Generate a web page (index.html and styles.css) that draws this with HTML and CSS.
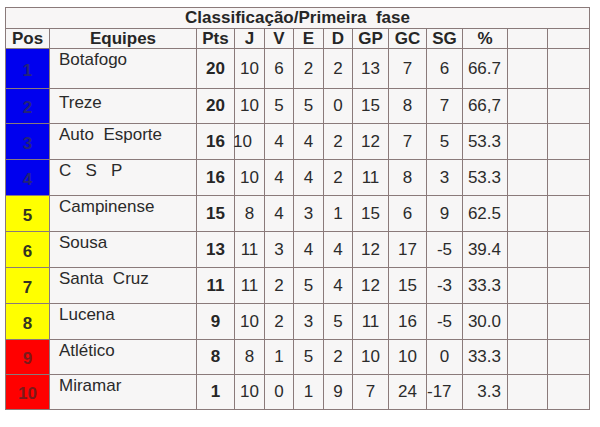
FILE: index.html
```html
<!DOCTYPE html>
<html lang="pt">
<head>
<meta charset="utf-8">
<link rel="stylesheet" href="styles.css">
</head>
<body>
<table class="standings">
  <colgroup>
    <col class="c-pos"><col class="c-team"><col class="c-pts"><col class="c-j"><col class="c-v"><col class="c-e"><col class="c-d"><col class="c-gp"><col class="c-gc"><col class="c-sg"><col class="c-pct"><col class="c-x1"><col class="c-x2">
  </colgroup>
  <thead>
    <tr class="title-row"><th colspan="13">Classificação/Primeira&nbsp; fase</th></tr>
    <tr class="head-row">
      <th>Pos</th><th>Equipes</th><th>Pts</th><th>J</th><th>V</th><th>E</th><th>D</th><th>GP</th><th>GC</th><th>SG</th><th>%</th><th></th><th></th>
    </tr>
  </thead>
  <tbody>
    <tr class="r1"><td class="pos blue">1</td><td class="team">Botafogo</td><td class="pts">20</td><td>10</td><td>6</td><td>2</td><td>2</td><td>13</td><td>7</td><td>6</td><td class="pct">66.7</td><td></td><td></td></tr>
    <tr class="r2"><td class="pos blue">2</td><td class="team">Treze</td><td class="pts">20</td><td>10</td><td>5</td><td>5</td><td>0</td><td>15</td><td>8</td><td>7</td><td class="pct">66,7</td><td></td><td></td></tr>
    <tr class="r3"><td class="pos blue">3</td><td class="team">Auto&nbsp; Esporte</td><td class="pts">16</td><td class="shift">10</td><td>4</td><td>4</td><td>2</td><td>12</td><td>7</td><td>5</td><td class="pct">53.3</td><td></td><td></td></tr>
    <tr class="r4"><td class="pos blue">4</td><td class="team">C&nbsp;&nbsp; S&nbsp;&nbsp; P</td><td class="pts">16</td><td>10</td><td>4</td><td>4</td><td>2</td><td>11</td><td>8</td><td>3</td><td class="pct">53.3</td><td></td><td></td></tr>
    <tr class="r5"><td class="pos yellow">5</td><td class="team">Campinense</td><td class="pts">15</td><td>8</td><td>4</td><td>3</td><td>1</td><td>15</td><td>6</td><td>9</td><td class="pct">62.5</td><td></td><td></td></tr>
    <tr class="r6"><td class="pos yellow">6</td><td class="team">Sousa</td><td class="pts">13</td><td>11</td><td>3</td><td>4</td><td>4</td><td>12</td><td>17</td><td>-5</td><td class="pct">39.4</td><td></td><td></td></tr>
    <tr class="r7"><td class="pos yellow">7</td><td class="team">Santa&nbsp; Cruz</td><td class="pts">11</td><td>11</td><td>2</td><td>5</td><td>4</td><td>12</td><td>15</td><td>-3</td><td class="pct">33.3</td><td></td><td></td></tr>
    <tr class="r8"><td class="pos yellow">8</td><td class="team">Lucena</td><td class="pts">9</td><td>10</td><td>2</td><td>3</td><td>5</td><td>11</td><td>16</td><td>-5</td><td class="pct">30.0</td><td></td><td></td></tr>
    <tr class="r9"><td class="pos red">9</td><td class="team">Atlético</td><td class="pts">8</td><td>8</td><td>1</td><td>5</td><td>2</td><td>10</td><td>10</td><td>0</td><td class="pct">33.3</td><td></td><td></td></tr>
    <tr class="r10"><td class="pos red">10</td><td class="team">Miramar</td><td class="pts">1</td><td>10</td><td>0</td><td>1</td><td>9</td><td>7</td><td>24</td><td class="sg-wide">-17</td><td class="pct">3.3</td><td></td><td></td></tr>
  </tbody>
</table>
</body>
</html>
```

FILE: styles.css
```css
html, body {
  margin: 0;
  background: #ffffff;
}
body {
  padding: 7px 0 0 5px;
  font-family: "Liberation Sans", Arial, sans-serif;
  color: #2b2b2b;
}
.standings {
  border-collapse: collapse;
  table-layout: fixed;
  width: 585px;
  background: #f7f6f6;
  font-size: 17px;
}
.standings th,
.standings td {
  border: 1px solid #8a7a7a;
  padding: 0;
  text-align: center;
  vertical-align: middle;
  overflow: visible;
  white-space: nowrap;
  line-height: 18px;
}
.c-pos { width: 44px; }
.c-team { width: 147px; }
.c-pts { width: 38px; }
.c-j { width: 30px; }
.c-v { width: 29px; }
.c-e { width: 30px; }
.c-d { width: 29px; }
.c-gp { width: 36px; }
.c-gc { width: 38px; }
.c-sg { width: 36px; }
.c-pct { width: 45px; }
.c-x1 { width: 40px; }
.c-x2 { width: 42px; }

.title-row { height: 21px; }
.head-row { height: 20px; }
.r1 { height: 40px; }
.r2 { height: 35px; }
.r3, .r4, .r5, .r6, .r7, .r8 { height: 36px; }
.r9, .r10 { height: 35px; }

.title-row th {
  font-size: 17px;
  font-weight: bold;
  color: #262626;
  background: #f8f6f6;
}
.head-row th {
  font-weight: bold;
  font-size: 17px;
  color: #262626;
}
.standings td.team {
  text-align: left;
  vertical-align: top;
  padding: 2px 0 0 9px;
  color: #2a2a2a;
}
.r2 td.team { padding-top: 5px; }
.standings td.pts {
  font-weight: bold;
  color: #262626;
}
.standings td.pct {
  text-align: right;
  padding-right: 6px;
}
.standings td.shift {
  text-align: left;
  text-indent: -2px;
}
.standings td.sg-wide {
  text-align: left;
  padding-left: 0;
}
.standings td.pos {
  font-weight: bold;
  padding-top: 4px;
}
.pos.blue {
  background: #0000ee;
  color: #23237a;
}
.pos.yellow {
  background: #ffff00;
  color: #333322;
}
.pos.red {
  background: #ff0000;
  color: #7a1a1a;
}
```
